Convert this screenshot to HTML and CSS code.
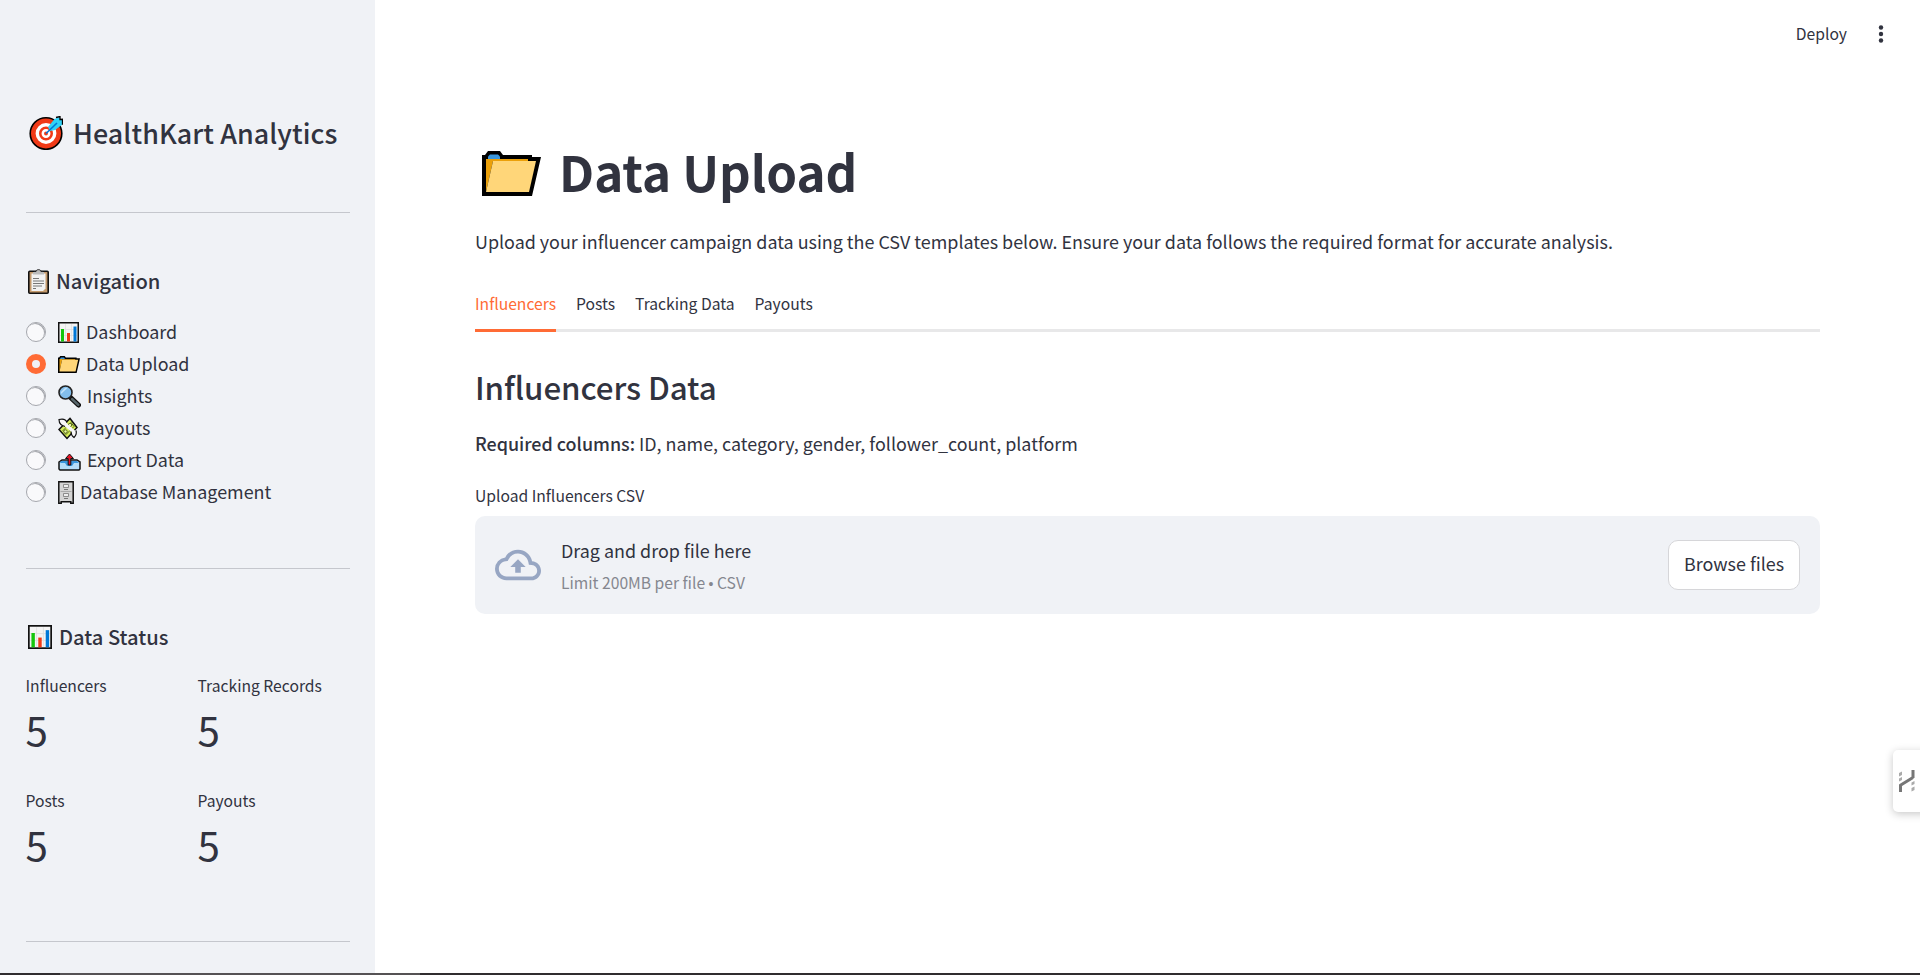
FILE: index.html
```html
<!DOCTYPE html>
<html lang="en">
<head>
<meta charset="utf-8">
<title>HealthKart Analytics</title>
<link rel="stylesheet" href="styles.css">
</head>
<body>
<svg class="defs" aria-hidden="true">
  <symbol id="chart" viewBox="0 0 21 21">
    <rect x=".75" y=".75" width="19.5" height="19.5" fill="#f4f4f4" stroke="#111" stroke-width="1.5"/>
    <path d="M7.5 2v17M13.5 2v17M2 7.5h17M2 13.500h17" stroke="#ddd" stroke-width=".7"/>
    <path d="M3 7h3v12.500H3z" fill="#16c60c"/><path d="M9 11h3v8.500H9z" fill="#f03a17"/><path d="M15.500 4.500h3v15h-3z" fill="#0078d7"/>
  </symbol>
  <symbol id="folder" viewBox="0 0 59 45">
    <path d="M0 45V4h3l3-4h12l3 4h29v2h9L50 45z" fill="#000"/>
    <path d="M6 8V5.500L8 3.500h8l2 2V8z" fill="#3a96dd"/>
    <path d="M4 41V8h42v2H11z" fill="#eba00a"/>
    <path d="M4 41L11 10h43l-7 31z" fill="#ffd679"/>
  </symbol>
</svg>
<div class="app">
  <aside class="sidebar">
    <h1 class="brand">
      <svg class="brand-icon" viewBox="0 0 34 34"><circle cx="17" cy="17.500" r="15.800" fill="#f03a17" stroke="#000" stroke-width="1.600"/><circle cx="17" cy="17.500" r="8.700" fill="none" stroke="#fff" stroke-width="3.400"/><circle cx="17" cy="17.500" r="3.200" fill="none" stroke="#fff" stroke-width="2.500"/><path d="M19 11l6.500-8L31 .8v3l2.500-.2v5L26 14l-5 1z" fill="#31d2f7"/><path d="M27 1.500l4-1v3l2.500-.2v5.500" fill="none" stroke="#000" stroke-width="1.300"/><path d="M17 17.500L28 7" stroke="#0078d7" stroke-width="1.700"/></svg>
      <span>HealthKart Analytics</span>
    </h1>
    <hr class="rule">
    <h2 class="section">
      <svg class="clip-icon" viewBox="0 0 21 25"><rect x=".8" y="2.300" width="19.400" height="21.900" rx="1" fill="#c49a6c" stroke="#111" stroke-width="1.600"/><path d="M3.500 4.500h14v15l-2.500 2.500H3.500z" fill="#f2f2f2"/><path d="M5 4.500V3h3c0-3 5-3 5 0h3v2.500H5z" fill="#bbb"/><path d="M6 2.500h2c0-2.500 5-2.500 5 0h2" fill="none" stroke="#222"/><path d="M5 9.500h6M5 12h11M5 14.500h11M5 17h9M5 19.500h3" stroke="#777" stroke-width="1"/></svg>
      <span>Navigation</span>
    </h2>
    <nav class="nav">
      <a class="item"><i class="radio"></i><svg class="icon w21"><use href="#chart"/></svg><span>Dashboard</span></a>
      <a class="item"><i class="radio on"></i><svg class="icon w22"><use href="#folder"/></svg><span>Data Upload</span></a>
      <a class="item"><i class="radio"></i><svg class="icon w23" viewBox="0 0 23 23"><path d="M12 12l8.500 8" stroke="#111" stroke-width="5" stroke-linecap="round"/><path d="M14 14l6.300 5.800" stroke="#57666b" stroke-width="2.500" stroke-linecap="round"/><circle cx="7.500" cy="7.500" r="6.500" fill="#83beec" stroke="#222" stroke-width="1.600"/><path d="M3 7l4-4 3-.5L3 9z" fill="#c3e3fa"/></svg><span>Insights</span></a>
      <a class="item"><i class="radio"></i><svg class="icon w20" viewBox="0 0 20 22"><path d="M1 12L12 1l7 9L9 21z" fill="#d5ed59" stroke="#111" stroke-width="1.500"/><path d="M5 13l8-8 3 4-8 8z" fill="none" stroke="#5c6d20"/><circle cx="12" cy="7.500" r="1.700" fill="#edf9a3" stroke="#5c6d20"/><circle cx="7.500" cy="14" r="1.700" fill="#edf9a3" stroke="#5c6d20"/><path d="M1 2c4-1 7 0 8 4l9 8c1 3 0 5-2 6-3-2-3-4-3-6L7 9C4 9 1 7 1 2z" fill="#f8f8f8"/><path d="M7 9C4 8 1 7 1 2c4-1 7 0 8 3M18 13c1 3 0 5-2 7-3-2-3-4-3-6" fill="none" stroke="#111" stroke-width="1.200"/></svg><span>Payouts</span></a>
      <a class="item"><i class="radio"></i><svg class="icon tray" viewBox="0 0 23 18"><path d="M1 9l3-2h15l3 2v7l-1 1H2l-1-1z" fill="#b4dcf8" stroke="#111" stroke-width="1.500"/><path d="M3 8h16l2 2h-5l-2 3H9l-2-3H2z" fill="#3a96dd"/><path d="M10.200 12V5.500H7.500l4-4.500 4 4.500h-2.700V12z" fill="#e81224" stroke="#111" stroke-width="1"/></svg><span>Export Data</span></a>
      <a class="item"><i class="radio"></i><svg class="icon w16" viewBox="0 0 16 23"><path d="M.8.8h14.400v21.400h-2.400v-1.400H3.200v1.400H.8z" fill="#d4d4d4" stroke="#111" stroke-width="1.500"/><path d="M2.500 10.500h11" stroke="#aaa"/><path d="M5.500 3.500h5v3h-5zM5.500 12.500h5v3h-5z" fill="#eee" stroke="#777" stroke-width=".8"/><path d="M6 8.500h4M6 17.500h4" stroke="#777"/></svg><span>Database Management</span></a>
    </nav>
    <hr class="rule">
    <h2 class="section status">
      <svg class="status-icon"><use href="#chart"/></svg>
      <span>Data Status</span>
    </h2>
    <div class="metrics">
      <div><div class="label">Influencers</div><div class="value">5</div></div>
      <div><div class="label">Tracking Records</div><div class="value">5</div></div>
      <div><div class="label">Posts</div><div class="value">5</div></div>
      <div><div class="label">Payouts</div><div class="value">5</div></div>
    </div>
    <hr class="rule last">
  </aside>
  <main class="main">
    <header class="toolbar">
      <span>Deploy</span>
      <svg class="dots" viewBox="0 0 6 18"><circle cx="3" cy="2.500" r="2.200"/><circle cx="3" cy="9" r="2.200"/><circle cx="3" cy="15.500" r="2.200"/></svg>
    </header>
    <div class="content">
      <h1 class="title"><svg class="title-icon"><use href="#folder"/></svg><span>Data Upload</span></h1>
      <p class="intro">Upload your influencer campaign data using the CSV templates below. Ensure your data follows the required format for accurate analysis.</p>
      <div class="tabs"><span class="tab active">Influencers</span><span class="tab">Posts</span><span class="tab">Tracking Data</span><span class="tab">Payouts</span></div>
      <h3 class="subtitle">Influencers Data</h3>
      <p class="required"><b>Required columns:</b> ID, name, category, gender, follower_count, platform</p>
      <div class="label upload-label">Upload Influencers CSV</div>
      <section class="drop">
        <svg class="cloud" viewBox="0 0 24 24"><path d="M19.350 10.040A7.490 7.490 0 0 0 12 4C9.110 4 6.600 5.640 5.350 8.040A5.994 5.994 0 0 0 0 14c0 3.310 2.690 6 6 6h13c2.760 0 5-2.240 5-5 0-2.640-2.050-4.780-4.650-4.960zM19 18H6c-2.210 0-4-1.790-4-4 0-2.050 1.530-3.760 3.560-3.970l1.070-.11.500-.95A5.469 5.469 0 0 1 12 6c2.620 0 4.880 1.860 5.390 4.430l.3 1.500 1.530.11A2.980 2.980 0 0 1 22 15c0 1.650-1.350 3-3 3zM8 13h2.550v3h2.900v-3H16l-4-4z"/></svg>
        <div class="drop-text"><div class="drop-main">Drag and drop file here</div><div class="drop-limit">Limit 200MB per file <span class="bullet">•</span> CSV</div></div>
        <button class="browse">Browse files</button>
      </section>
    </div>
  </main>
  <div class="widget"><svg viewBox="0 0 16 22"><path d="M1 15.500L14 7.500M1.500 22V14.500M14 0V8" fill="none" stroke="#777" stroke-width="3"/><path d="M0 3l3-1.500V5L0 6.500zM0 8.500L3 7v3l-3 1.500zM12.500 12.500l3-1.500v3l-3 1.500zM12.500 18l3-1.500V20l-3 1.500z" fill="#aaa"/></svg></div>
  <footer class="edge"></footer>
</div>
</body>
</html>
```
FILE: styles.css
```css
* { box-sizing: border-box; }
body { margin: 0; background: #fff; color: #31333f; font: 17.91px/30px "Noto Sans CJK SC", "Noto Sans", sans-serif; }
h1, h2, h3, p { margin: 0; }
svg { display: block; flex: none; }
.defs { position: absolute; width: 0; height: 0; }
.app { position: relative; display: flex; height: 975px; overflow: hidden; white-space: nowrap; }
.sidebar { width: 375px; flex: none; padding: 115px 25px 0 26px; background: #f0f2f6; }
.brand { display: flex; height: 36px; padding-left: 3px; gap: 10px; font-size: 26.86px; line-height: 36px; font-weight: 500; letter-spacing: .07px; }
.brand-icon { width: 34px; height: 34px; margin-top: 1px; }
.rule { height: 1px; margin: 61px 0 54px; border: 0; background: #c5c7cd; }
.section { display: flex; height: 28px; padding-left: 2px; gap: 7px; font-size: 20.15px; line-height: 28px; font-weight: 500; }
.clip-icon { width: 21px; height: 25px; margin-top: 2px; }
.nav { margin: 21px 0 60px; }
.nav + .rule { margin: 60px 0 54px; }
.item { display: flex; align-items: center; height: 32px; }
.item span { line-height: 32px; margin-top: -3px; }
.radio { width: 20px; height: 20px; margin-right: 12px; border-radius: 50%; background: #f9f9fb; border: 1px solid #a5a7ad; box-shadow: inset -1px 1px 0 #a5a7ad; }
.radio.on { border: 6.5px solid #ff6b35; background: #f0f2f6; box-shadow: none; }
.icon { height: 23px; margin-right: 6px; }
.w16 { width: 16px; } .w20 { width: 20px; } .w21 { width: 21px; height: 21px; margin-right: 7px; } .w22 { width: 22px; height: 17px; } .w23 { width: 23px; }
.tray { width: 23px; height: 18px; margin-top: 4px; }
.status-icon { width: 24px; height: 24px; margin-top: 2px; }
.metrics { display: grid; grid-template-columns: 152px 152px; column-gap: 20px; row-gap: 33px; margin: 23px 0 0 -.5px; }
.label { font-size: 15.67px; line-height: 24px; }
.value { height: 54px; margin-top: 4px; font-size: 40.3px; line-height: 54px; }
.rule.last { margin: 70px 0 0; }
.main { flex: 1; }
.toolbar { display: flex; justify-content: flex-end; gap: 31px; height: 60px; padding: 22px 36px 0 0; font-size: 15.67px; line-height: 24px; }
.dots { width: 6px; height: 18px; margin-top: 3px; fill: #31333f; }
.content { padding: 78px 100px 0; }
.title { display: flex; height: 66px; padding-left: 7px; gap: 18px; font-size: 49.25px; line-height: 66px; font-weight: 700; }
.title-icon { width: 59px; height: 45px; margin-top: 13px; }
.intro { margin-top: 22px; }
.tabs { display: flex; gap: 20px; height: 40px; margin-top: 36px; font-size: 15.67px; line-height: 24px; box-shadow: inset 0 -3px #e8e8e9; }
.tab.active { color: #ff6b35; border-bottom: 3px solid #ff6b35; }
.subtitle { margin-top: 34px; font-size: 31.3px; line-height: 42px; font-weight: 500; letter-spacing: -.07px; }
.required { margin-top: 20px; }
.required b { font-weight: 500; }
.upload-label { margin-top: 26px; }
.drop { display: flex; align-items: center; height: 98px; margin-top: 8px; padding: 0 20px; border-radius: 10px; background: #f0f2f6; }
.cloud { width: 46px; height: 46px; fill: #97a6c3; }
.drop-text { margin: -1px 0 0 20px; }
.drop-limit { margin-top: 6px; font-size: 15.67px; line-height: 24px; color: #85878f; }
.bullet { font-family: "Liberation Sans", sans-serif; font-size: 14px; line-height: 1; }
.browse { width: 132px; height: 50px; margin-left: auto; padding: 0 0 4px; border: 1px solid #d6d6d9; border-radius: 10px; background: #fff; color: inherit; font: inherit; }
.widget { position: absolute; left: 1893px; top: 750px; width: 40px; height: 62px; padding: 20px 0 0 6px; border-radius: 5px; background: #fff; box-shadow: 0 2px 9px rgba(0,0,0,.22); }
.widget svg { width: 16px; height: 22px; }
.edge { position: absolute; left: 0; right: 0; bottom: 0; height: 2px; background: linear-gradient(90deg, #302d2f 60px, #555254 60px 420px, #302d2f 420px); }
```
